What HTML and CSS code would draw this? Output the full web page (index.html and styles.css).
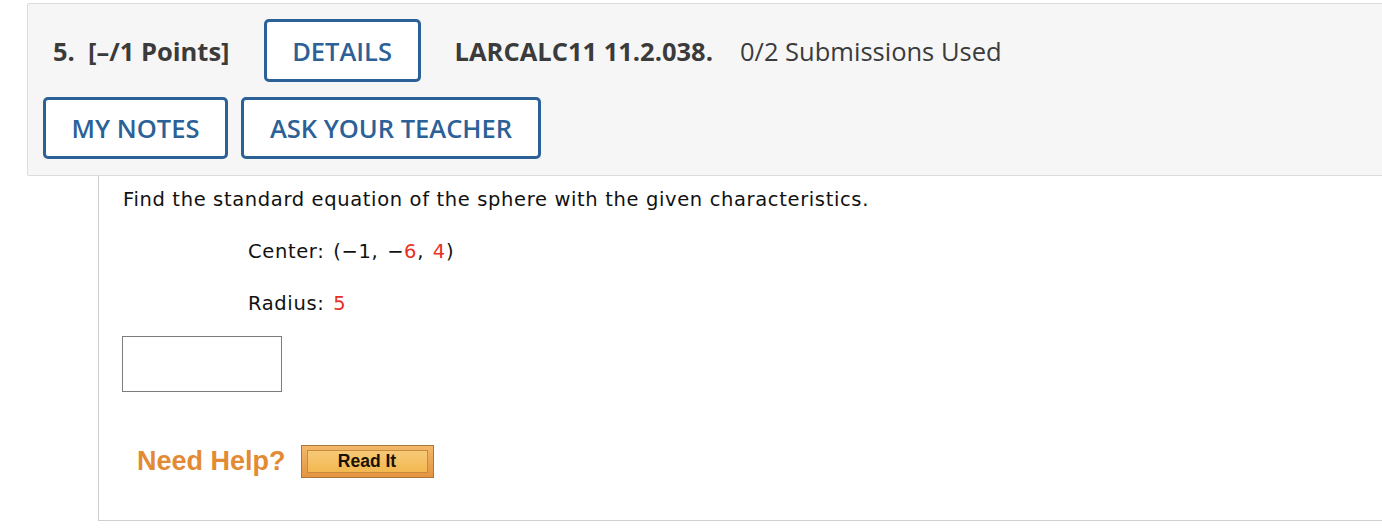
FILE: index.html
```html
<!DOCTYPE html>
<html>
<head>
<meta charset="utf-8">
<link rel="stylesheet" href="styles.css">
</head>
<body>
<div class="page">
  <div class="qhead">
    <div class="row1">
      <span class="qnum">5.&nbsp; [–/1 Points]</span>
      <button class="btn btn-details">DETAILS</button>
      <span class="qref">LARCALC11 11.2.038.</span>
      <span class="subs">0/2 Submissions Used</span>
    </div>
    <div class="row2">
      <button class="btn btn-notes">MY NOTES</button>
      <button class="btn btn-ask">ASK YOUR TEACHER</button>
    </div>
  </div>
  <div class="qbody">
    <p class="prompt">Find the standard equation of the sphere with the given characteristics.</p>
    <p class="given">Center: (−1, −<span class="red">6</span>, <span class="red">4</span>)</p>
    <p class="given">Radius: <span class="red">5</span></p>
    <div class="answer"></div>
    <div class="help">
      <span class="needhelp">Need Help?</span>
      <span class="readit"><span class="readit-inner">Read It</span></span>
    </div>
  </div>
</div>
</body>
</html>
```

FILE: styles.css
```css
html, body {
  margin: 0;
  padding: 0;
  background: #fff;
  overflow: hidden;
}
.page {
  padding-top: 3px;
  padding-left: 27px;
  width: 1450px;
}
.qhead {
  background: #f6f6f6;
  border: 1px solid #dcdcdc;
  border-radius: 2px;
  padding: 15px 0 16px 15px;
  font-family: "Open Sans", sans-serif;
  color: #3b3b3b;
}
.row1 {
  display: flex;
  align-items: center;
  padding-left: 10px;
}
.qnum {
  font-weight: 700;
  font-size: 25.5px;
  margin-right: 34px;
}
.qref {
  font-weight: 700;
  font-size: 25.5px;
  margin-left: 34px;
  margin-right: 27px;
}
.subs {
  font-size: 25.5px;
  font-weight: 400;
}
.row2 {
  display: flex;
  gap: 13px;
  margin-top: 15px;
}
.btn {
  font-family: "Open Sans", sans-serif;
  font-weight: 600;
  font-size: 25.5px;
  color: #2c6198;
  background: #fff;
  border: 3px solid #2c6198;
  border-radius: 5px;
  height: 63px;
  padding: 0;
  box-sizing: border-box;
}
.btn-details { width: 157px; }
.btn-notes { width: 185px; height: 62px; }
.btn-ask { width: 300px; height: 62px; }
.qbody {
  margin-left: 71px;
  border-left: 1px solid #cfcfcf;
  border-bottom: 1px solid #cfcfcf;
  height: 345px;
  padding-left: 24px;
  font-family: Verdana, "DejaVu Sans", sans-serif;
  font-size: 19.5px;
  letter-spacing: 0.64px;
  color: #111;
  box-sizing: border-box;
}
.prompt {
  margin: 0;
  padding-top: 12px;
  line-height: 24px;
}
.given {
  margin: 28px 0 0 125px;
  line-height: 24px;
  word-spacing: 2px;
}
.red { color: #e8301e; }
.answer {
  width: 158px;
  height: 54px;
  border: 1px solid #7c7c7c;
  margin-top: 20px;
  margin-left: -1px;
}
.help {
  display: flex;
  align-items: center;
  margin-top: 53px;
  margin-left: 14px;
  letter-spacing: 0;
}
.needhelp {
  font-family: "Liberation Sans", Arial, sans-serif;
  font-weight: 700;
  font-size: 27px;
  color: #e38b34;
  margin-right: 15px;
}
.readit {
  display: block;
  width: 133px;
  height: 33px;
  box-sizing: border-box;
  border: 1px solid #a9773a;
  background: linear-gradient(#f2b86a, #e49440);
  padding: 4px 5px;
}
.readit-inner {
  display: flex;
  align-items: center;
  justify-content: center;
  height: 100%;
  box-sizing: border-box;
  border: 1px solid #c98a3d;
  background: linear-gradient(#f7c978, #f2b850);
  font-family: "Liberation Sans", Arial, sans-serif;
  font-weight: 700;
  font-size: 17.5px;
  color: #1a1206;
}
```
